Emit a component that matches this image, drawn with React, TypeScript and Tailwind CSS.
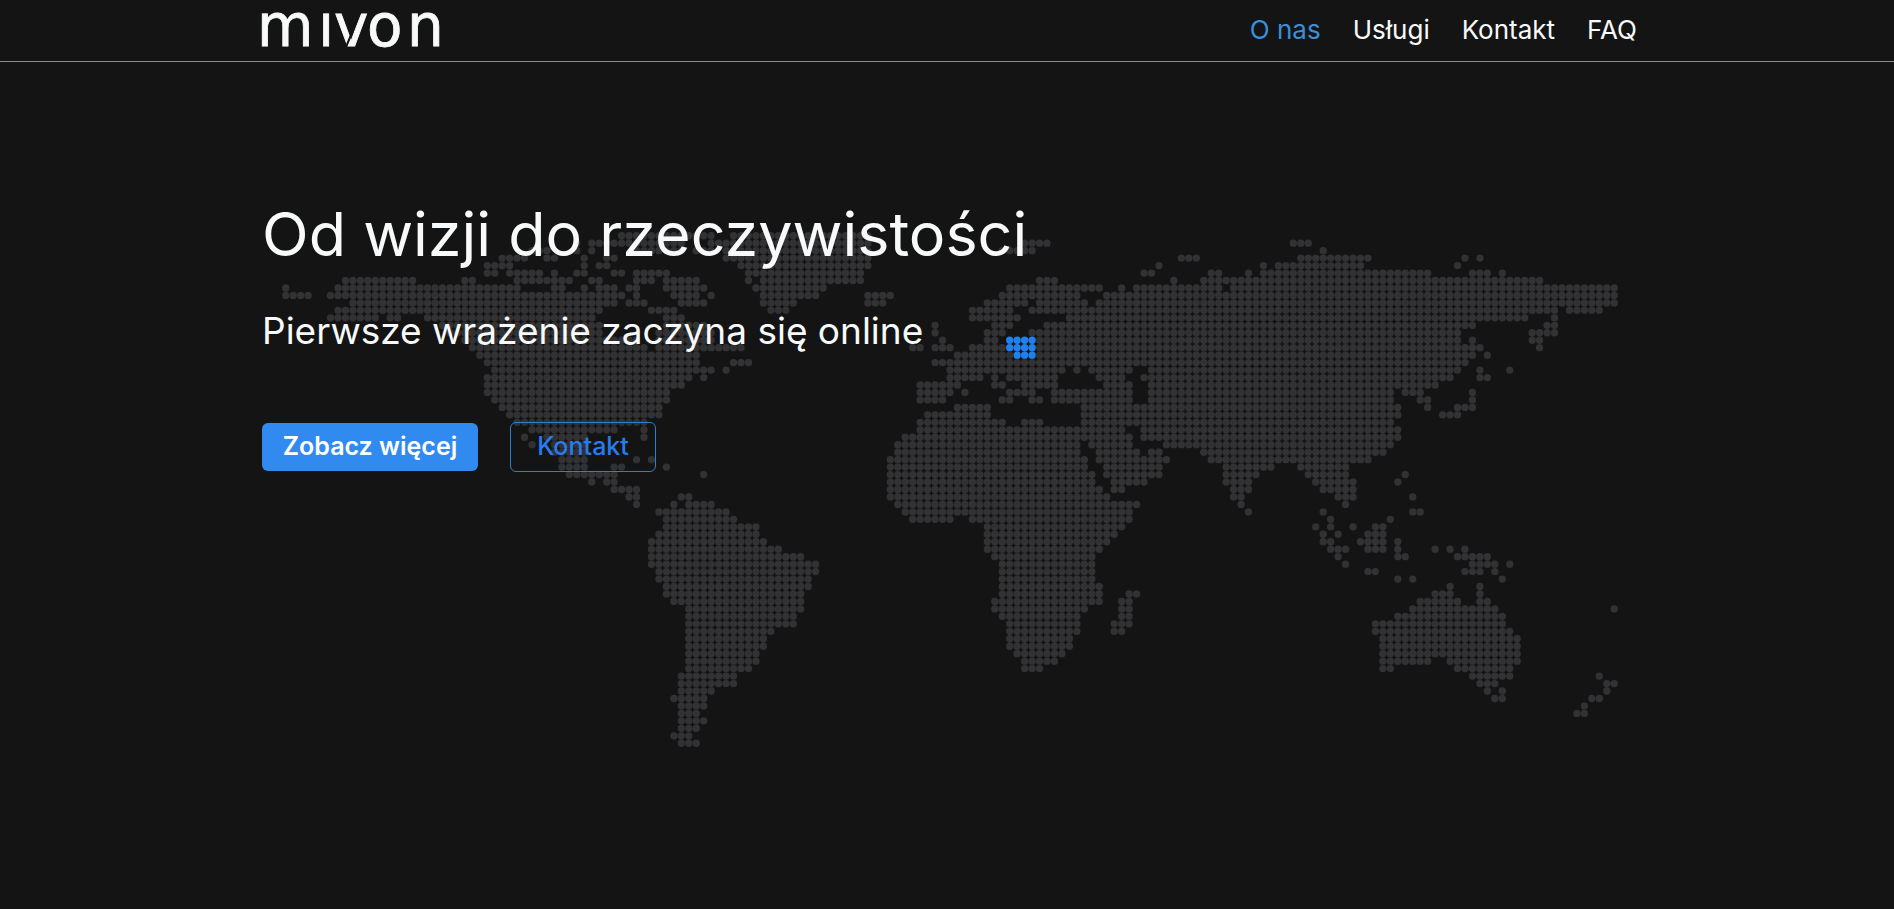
import React from "react";

type Run = [number, number];

// land per grid row, as [first column, last column]
const LAND: Array<Array<Run>> = [
  [[45, 57], [60, 78]],
  [[39, 39], [41, 53], [57, 78], [99, 102], [135, 137]],
  [[33, 35], [39, 39], [41, 41], [47, 53], [55, 57], [59, 78], [96, 100], [139, 139]],
  [[29, 32], [35, 36], [40, 40], [43, 44], [59, 78], [120, 122], [136, 145], [158, 158], [160, 160]],
  [[27, 30], [40, 40], [42, 43], [61, 78], [117, 117], [131, 131], [133, 144], [157, 157]],
  [[27, 28], [30, 34], [36, 36], [39, 40], [44, 45], [47, 51], [62, 77], [115, 116], [124, 125], [129, 129], [131, 153], [159, 161], [163, 163]],
  [[8, 17], [24, 25], [31, 38], [41, 42], [47, 49], [51, 55], [62, 62], [64, 77], [101, 103], [119, 119], [123, 168]],
  [[0, 0], [7, 31], [36, 37], [40, 40], [42, 44], [46, 47], [51, 56], [63, 72], [97, 109], [112, 112], [114, 125], [127, 178]],
  [[0, 3], [6, 45], [47, 47], [52, 55], [57, 57], [64, 71], [78, 81], [96, 106], [110, 178]],
  [[9, 44], [46, 48], [53, 56], [64, 68], [78, 80], [94, 99], [101, 107], [109, 178]],
  [[7, 42], [49, 52], [65, 67], [92, 97], [100, 170], [172, 176]],
  [[6, 12], [14, 15], [19, 41], [51, 53], [92, 98], [105, 166], [170, 170]],
  [[21, 42], [51, 56], [87, 87], [95, 97], [102, 159], [169, 170]],
  [[22, 42], [50, 57], [87, 87], [94, 96], [100, 157], [167, 170]],
  [[24, 47], [50, 57], [88, 88], [94, 95], [101, 157], [159, 159], [167, 168]],
  [[25, 48], [50, 61], [84, 85], [87, 89], [92, 96], [101, 160], [168, 168]],
  [[26, 55], [90, 97], [101, 159], [161, 161]],
  [[27, 55], [60, 62], [87, 158]],
  [[28, 57], [59, 59], [89, 104], [106, 106], [108, 113], [116, 157], [160, 160], [164, 164]],
  [[27, 54], [56, 56], [89, 93], [95, 95], [97, 103], [109, 112], [115, 156], [160, 161]],
  [[27, 53], [85, 90], [95, 96], [99, 103], [110, 113], [116, 154]],
  [[27, 51], [85, 89], [91, 91], [97, 100], [103, 113], [116, 148], [150, 152], [159, 159]],
  [[28, 51], [85, 88], [96, 97], [100, 101], [103, 113], [116, 148], [152, 153], [159, 159]],
  [[29, 50], [90, 94], [107, 149], [153, 153], [157, 159]],
  [[30, 50], [86, 94], [107, 149], [155, 157]],
  [[31, 48], [85, 96], [99, 101], [107, 148]],
  [[33, 44], [48, 48], [85, 112], [115, 149]],
  [[32, 32], [35, 40], [48, 48], [83, 113], [115, 149]],
  [[33, 33], [36, 40], [82, 106], [108, 113], [118, 148]],
  [[36, 40], [82, 106], [109, 114], [116, 117], [123, 147]],
  [[37, 40], [47, 47], [49, 49], [81, 107], [109, 118], [124, 145]],
  [[37, 40], [44, 45], [51, 51], [81, 107], [110, 117], [126, 132], [136, 142]],
  [[38, 44], [56, 56], [81, 108], [110, 117], [126, 130], [137, 142], [150, 150]],
  [[41, 41], [43, 44], [81, 108], [111, 115], [126, 129], [138, 143], [149, 149]],
  [[44, 47], [81, 109], [111, 112], [127, 129], [139, 143]],
  [[46, 47], [53, 54], [81, 110], [127, 128], [141, 143], [151, 151]],
  [[47, 47], [52, 52], [54, 57], [82, 114], [128, 128], [142, 142]],
  [[50, 59], [83, 113], [129, 129], [139, 139], [151, 152]],
  [[51, 60], [84, 89], [92, 113], [140, 140], [148, 148]],
  [[51, 63], [94, 112], [138, 138], [140, 140], [143, 143], [146, 147]],
  [[50, 63], [94, 111], [139, 139], [141, 141], [145, 147]],
  [[49, 64], [94, 110], [139, 140], [144, 147], [149, 149]],
  [[49, 66], [94, 109], [140, 142], [145, 147], [149, 149], [154, 154], [156, 156], [158, 158]],
  [[49, 69], [95, 108], [141, 141], [149, 150], [157, 161]],
  [[49, 71], [96, 108], [142, 142], [159, 162], [164, 164]],
  [[50, 71], [96, 108], [145, 146], [158, 160], [162, 162]],
  [[50, 70], [96, 108], [149, 149], [151, 151], [163, 163]],
  [[51, 70], [96, 109], [156, 156], [160, 160]],
  [[51, 69], [96, 109], [113, 114], [154, 156], [160, 160]],
  [[52, 69], [95, 109], [112, 113], [152, 157], [160, 161]],
  [[54, 69], [95, 107], [112, 113], [151, 162], [178, 178]],
  [[54, 68], [96, 106], [112, 113], [149, 163]],
  [[54, 68], [97, 106], [111, 113], [146, 163]],
  [[54, 65], [97, 106], [111, 112], [146, 164]],
  [[54, 64], [97, 105], [147, 165]],
  [[54, 64], [97, 105], [147, 165]],
  [[54, 63], [98, 104], [147, 165]],
  [[54, 63], [99, 103], [147, 153], [156, 165]],
  [[54, 62], [99, 101], [147, 148], [157, 164]],
  [[53, 60], [159, 164], [176, 176]],
  [[53, 60], [160, 162], [177, 178]],
  [[53, 57], [161, 161], [163, 163], [177, 177]],
  [[52, 56], [162, 163], [175, 176]],
  [[53, 56], [174, 174]],
  [[53, 55], [173, 174]],
  [[53, 56]],
  [[53, 55]],
  [[52, 54]],
  [[53, 55]],
];

// Poland, [row, first column, last column]
const POLAND = [
  [14, 97, 100],
  [15, 97, 100],
  [16, 98, 100],
];

const NAV = [
  { label: "O nas", href: "#o-nas", active: true },
  { label: "Usługi", href: "#uslugi", active: false },
  { label: "Kontakt", href: "#kontakt", active: false },
  { label: "FAQ", href: "#faq", active: false },
];

// every dot is a zero length segment with round caps
function dots(row: number, from: number, to: number) {
  let d = "";
  for (let col = from; col <= to; col++) {
    d += `M${col} ${row}h0`;
  }
  return d;
}

const landPath = LAND.map((runs, row) => runs.map(([a, b]) => dots(row, a, b)).join("")).join("");
const polandPath = POLAND.map(([row, a, b]) => dots(row, a, b)).join("");

function WorldMap() {
  return (
    <svg viewBox="-0.5 -0.5 179 69" className="w-full max-w-[1336px]" fill="none" strokeWidth="0.98" strokeLinecap="round" aria-hidden="true">
      <path d={landPath} stroke="#323234" />
      <path d={polandPath} stroke="#2080ee" />
    </svg>
  );
}

function Logo() {
  return (
    <svg viewBox="0 0 180 34" className="h-[34px] w-[180px] overflow-visible" role="img" aria-label="mivon">
      <text x="-5 56 72 105 145" y="32" fill="#f8f9fa" stroke="#f8f9fa" strokeWidth="0.8" fontSize="58" fontFamily="'DejaVu Sans', sans-serif">
        mıvon
      </text>
      <path d="M84 33L99 -3" stroke="#141414" strokeWidth="2" />
    </svg>
  );
}

export default function App() {
  return (
    <div className="min-h-screen bg-[#141414] font-['Inter',sans-serif] text-[#f8f9fa]">
      <header className="border-b border-[#8b8e91]">
        <div className="mx-auto flex h-[61px] max-w-[1380px] items-center justify-between pl-[5px]">
          <a href="#">
            <Logo />
          </a>
          <nav className="flex gap-8 pb-0.5 text-[26px] leading-8">
            {NAV.map((item) => (
              <a key={item.label} href={item.href} className={item.active ? "text-[#3b8fd6]" : "hover:text-[#3b8fd6]"}>
                {item.label}
              </a>
            ))}
          </nav>
        </div>
      </header>

      <main className="relative mx-auto max-w-[1380px] pl-[5px] pt-[134px]">
        <div className="absolute inset-x-0 top-[170px] flex justify-center pl-[5px]">
          <WorldMap />
        </div>
        <div className="relative">
          <h1 className="text-[61px] leading-[76px]">Od wizji do rzeczywistości</h1>
          <p className="mt-[37px] text-[37px] leading-[44px]">Pierwsze wrażenie zaczyna się online</p>
          <div className="mt-[69px] flex items-center gap-8">
            <button className="h-12 w-[216px] rounded-md bg-[#318aef] text-[25px] font-semibold text-white">Zobacz więcej</button>
            <button className="h-[50px] w-[146px] rounded-md border border-[#2f7fd0] text-[25px] font-medium text-[#267bf0]">Kontakt</button>
          </div>
        </div>
      </main>
    </div>
  );
}
